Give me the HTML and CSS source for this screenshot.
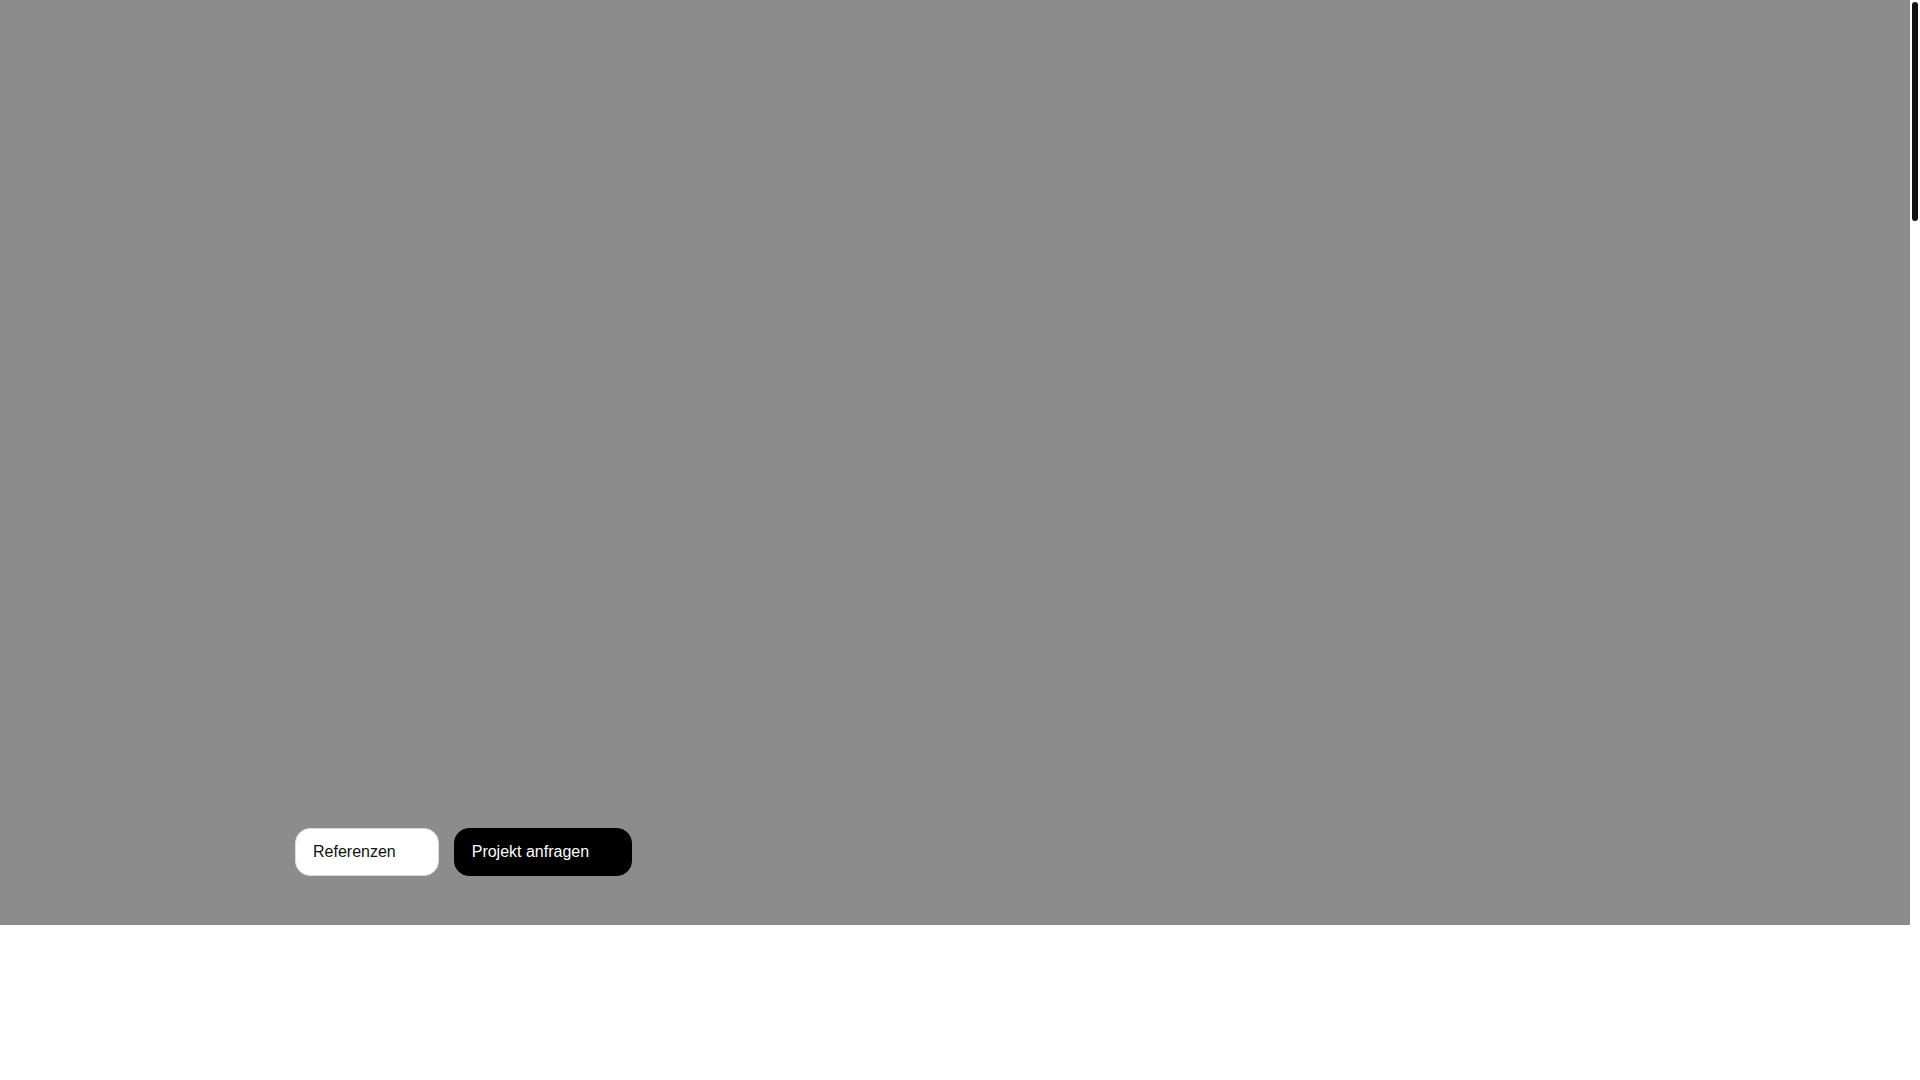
FILE: index.html
```
<!DOCTYPE html>
<html lang="de">
<head>
    <meta charset="UTF-8">
    <meta name="viewport" content="width=device-width, initial-scale=1.0">
    <title>Startseite</title>
    <link rel="stylesheet" href="styles.css">
</head>
<body>
    <main class="content">
        <section class="hero">
            <div class="container">
                <div class="hero-buttons">
                    <a href="#referenzen" class="button button-light">Referenzen <span class="button-icon"></span></a>
                    <a href="#kontakt" class="button button-dark">Projekt anfragen <span class="button-icon"></span></a>
                </div>
            </div>
        </section>
    </main>
    <div class="scroll-track">
        <div class="scroll-thumb"></div>
    </div>
</body>
</html>
```

FILE: styles.css
```
* {
    box-sizing: border-box;
}

body {
    margin: 0;
    min-height: 100vh;
    display: flex;
    background-color: #fff;
    font-family: "Liberation Sans", Arial, sans-serif;
    font-size: 16px;
    line-height: 24px;
}

.content {
    flex: 1;
}

.hero {
    display: flex;
    align-items: flex-end;
    min-height: calc(100vh - 155px);
    padding-bottom: 49px;
    background-color: #8c8c8c;
}

.container {
    width: 100%;
    max-width: 1320px;
    margin: 0 auto;
}

.hero-buttons {
    display: flex;
    flex-wrap: wrap;
    gap: 15px;
}

.button {
    display: flex;
    align-items: center;
    gap: 9px;
    padding: 11px 17px;
    border: 1px solid #000;
    border-radius: 15px;
    text-decoration: none;
}

.button-light {
    background-color: #fff;
    border-color: #dcdcdc;
    color: #111;
}

.button-dark {
    background-color: #000;
    color: #fff;
}

.button-icon {
    width: 16px;
    height: 16px;
}

/* scrollbar */
.scroll-track {
    width: 10px;
    padding: 2px;
    background-color: #fff;
}

.scroll-thumb {
    height: 219px;
    border-radius: 3px;
    background-color: #111;
}
```
